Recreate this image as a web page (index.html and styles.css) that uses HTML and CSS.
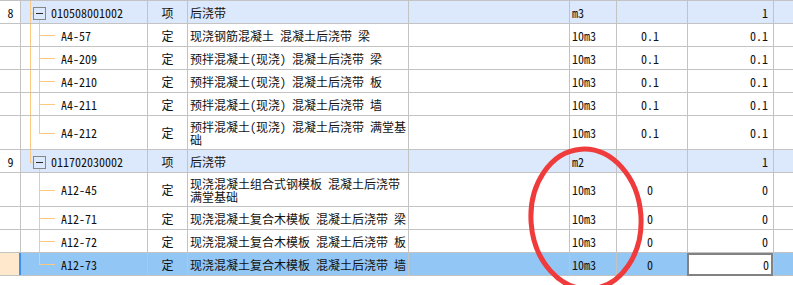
FILE: index.html
```html
<!DOCTYPE html>
<html lang="zh-CN">
<head>
<meta charset="utf-8">
<title>后浇带</title>
<link rel="stylesheet" href="styles.css">
</head>
<body>
<div class="sheet">
  <div class="row grp">
    <div class="c c0">8</div>
    <div class="c c1 code-g"><span class="l1"></span><span class="h1"></span><span class="box"></span><span class="l2b"></span>010508001002</div>
    <div class="c c2">项</div>
    <div class="c c3">后浇带</div>
    <div class="c c4"></div>
    <div class="c c5">m3</div>
    <div class="c c6"></div>
    <div class="c c7">1</div>
    <div class="c c8"></div>
  </div>
  <div class="row">
    <div class="c c0"></div>
    <div class="c c1 code-k"><span class="l1"></span><span class="l2"></span><span class="h2"></span>A4-57</div>
    <div class="c c2">定</div>
    <div class="c c3">现浇钢筋混凝土 混凝土后浇带 梁</div>
    <div class="c c4"></div>
    <div class="c c5">10m3</div>
    <div class="c c6">0.1</div>
    <div class="c c7">0.1</div>
    <div class="c c8"></div>
  </div>
  <div class="row">
    <div class="c c0"></div>
    <div class="c c1 code-k"><span class="l1"></span><span class="l2"></span><span class="h2"></span>A4-209</div>
    <div class="c c2">定</div>
    <div class="c c3">预拌混凝土(现浇) 混凝土后浇带 梁</div>
    <div class="c c4"></div>
    <div class="c c5">10m3</div>
    <div class="c c6">0.1</div>
    <div class="c c7">0.1</div>
    <div class="c c8"></div>
  </div>
  <div class="row">
    <div class="c c0"></div>
    <div class="c c1 code-k"><span class="l1"></span><span class="l2"></span><span class="h2"></span>A4-210</div>
    <div class="c c2">定</div>
    <div class="c c3">预拌混凝土(现浇) 混凝土后浇带 板</div>
    <div class="c c4"></div>
    <div class="c c5">10m3</div>
    <div class="c c6">0.1</div>
    <div class="c c7">0.1</div>
    <div class="c c8"></div>
  </div>
  <div class="row">
    <div class="c c0"></div>
    <div class="c c1 code-k"><span class="l1"></span><span class="l2"></span><span class="h2"></span>A4-211</div>
    <div class="c c2">定</div>
    <div class="c c3">预拌混凝土(现浇) 混凝土后浇带 墙</div>
    <div class="c c4"></div>
    <div class="c c5">10m3</div>
    <div class="c c6">0.1</div>
    <div class="c c7">0.1</div>
    <div class="c c8"></div>
  </div>
  <div class="row tall">
    <div class="c c0"></div>
    <div class="c c1 code-k"><span class="l1"></span><span class="l2 end"></span><span class="h2"></span>A4-212</div>
    <div class="c c2">定</div>
    <div class="c c3 wrap">预拌混凝土(现浇) 混凝土后浇带 满堂基<br>础</div>
    <div class="c c4"></div>
    <div class="c c5">10m3</div>
    <div class="c c6">0.1</div>
    <div class="c c7">0.1</div>
    <div class="c c8"></div>
  </div>
  <div class="row grp">
    <div class="c c0">9</div>
    <div class="c c1 code-g"><span class="l1 end"></span><span class="h1"></span><span class="box"></span><span class="l2b"></span>011702030002</div>
    <div class="c c2">项</div>
    <div class="c c3">后浇带</div>
    <div class="c c4"></div>
    <div class="c c5">m2</div>
    <div class="c c6"></div>
    <div class="c c7">1</div>
    <div class="c c8"></div>
  </div>
  <div class="row tall">
    <div class="c c0"></div>
    <div class="c c1 code-k"><span class="l2"></span><span class="h2"></span>A12-45</div>
    <div class="c c2">定</div>
    <div class="c c3 wrap">现浇混凝土组合式钢模板 混凝土后浇带<br>满堂基础</div>
    <div class="c c4"></div>
    <div class="c c5">10m3</div>
    <div class="c c6">0</div>
    <div class="c c7">0</div>
    <div class="c c8"></div>
  </div>
  <div class="row">
    <div class="c c0"></div>
    <div class="c c1 code-k"><span class="l2"></span><span class="h2"></span>A12-71</div>
    <div class="c c2">定</div>
    <div class="c c3">现浇混凝土复合木模板 混凝土后浇带 梁</div>
    <div class="c c4"></div>
    <div class="c c5">10m3</div>
    <div class="c c6">0</div>
    <div class="c c7">0</div>
    <div class="c c8"></div>
  </div>
  <div class="row">
    <div class="c c0"></div>
    <div class="c c1 code-k"><span class="l2"></span><span class="h2"></span>A12-72</div>
    <div class="c c2">定</div>
    <div class="c c3">现浇混凝土复合木模板 混凝土后浇带 板</div>
    <div class="c c4"></div>
    <div class="c c5">10m3</div>
    <div class="c c6">0</div>
    <div class="c c7">0</div>
    <div class="c c8"></div>
  </div>
  <div class="row sel">
    <div class="c c0"></div>
    <div class="c c1 code-k"><span class="l2 end"></span><span class="h2"></span>A12-73</div>
    <div class="c c2">定</div>
    <div class="c c3">现浇混凝土复合木模板 混凝土后浇带 墙</div>
    <div class="c c4"></div>
    <div class="c c5">10m3</div>
    <div class="c c6">0</div>
    <div class="c c7"><span class="edit">0</span></div>
    <div class="c c8"></div>
  </div>
</div>
<svg class="mark" width="793" height="285" viewBox="0 0 793 285" aria-hidden="true">
  <ellipse cx="586" cy="219" rx="55" ry="70" fill="none" stroke="#ef3b3b" stroke-width="5" transform="rotate(-4 586 219)"/>
</svg>
</body>
</html>
```

FILE: styles.css
```css
* { box-sizing: border-box; }

html, body {
  margin: 0;
  background: #ffffff;
}

body {
  position: relative;
  width: 793px;
  height: 285px;
  overflow: hidden;
  font-family: "Noto Sans Mono CJK SC", "Noto Sans CJK SC", monospace;
  font-size: 12px;
  font-weight: 300;
  line-height: 13px;
  color: #111;
}

.sheet {
  border-top: 1px solid #c3c3c3;
}

.row {
  display: grid;
  grid-template-columns: 21px 127px 40px 221px 161px 47px 71px 86px 19px;
  height: 23px;
  border-bottom: 1px solid #c3c3c3;
}

.row.tall { height: 34px; }

.c {
  position: relative;
  display: flex;
  align-items: center;
  min-width: 0;
  white-space: nowrap;
  border-right: 1px solid #c3c3c3;
}

.c8 { border-right: none; }

.c0 { justify-content: center; padding-left: 1px; }
.c2 { justify-content: center; }
.c3 { padding-left: 2px; }
.c5 { padding-left: 2px; }
.c6 { justify-content: center; padding-right: 4px; }
.c7 { justify-content: flex-end; padding-right: 5px; }

.code-g { padding-left: 30px; }
.code-k { padding-left: 40px; }

.grp .c { background: #dce8fb; }
.grp .c0 { background: #ffffff; }

.sel .c { background: #92c6f4; }
.sel .c0 {
  background: #ffe8cb;
  border-right: 2px solid #3f8ff2;
}

/* tree guide lines */
.l1, .l2, .l2b, .h1, .h2 {
  position: absolute;
  background: #fdc981;
}

.l1 { left: 9px; top: 0; bottom: 0; width: 1px; }
.l1.end { bottom: auto; height: calc(50% + 1px); }

.h1 { left: 9px; width: 3px; height: 1px; top: calc(50% + 1px); }

.box {
  position: absolute;
  left: 12px;
  top: calc(50% - 5px);
  width: 13px;
  height: 13px;
  border: 1px solid #868686;
}

.box::after {
  content: "";
  position: absolute;
  left: 2px;
  top: 5px;
  width: 7px;
  height: 1px;
  background: #2a2a2a;
}

.l2b { left: 18px; top: calc(50% + 8px); bottom: 0; width: 1px; }

.l2 { left: 18px; top: 0; bottom: 0; width: 1px; }
.l2.end { bottom: auto; height: calc(50% + 1px); }

.h2 { left: 18px; width: 16px; height: 1px; top: 50%; }

.edit {
  position: absolute;
  left: -1px;
  top: 0;
  width: 86px;
  height: 23px;
  display: flex;
  align-items: center;
  justify-content: flex-end;
  padding-right: 2px;
  background: #ffffff;
  border: 2px solid #828282;
}

.mark {
  position: absolute;
  left: 0;
  top: 0;
  pointer-events: none;
}
```
